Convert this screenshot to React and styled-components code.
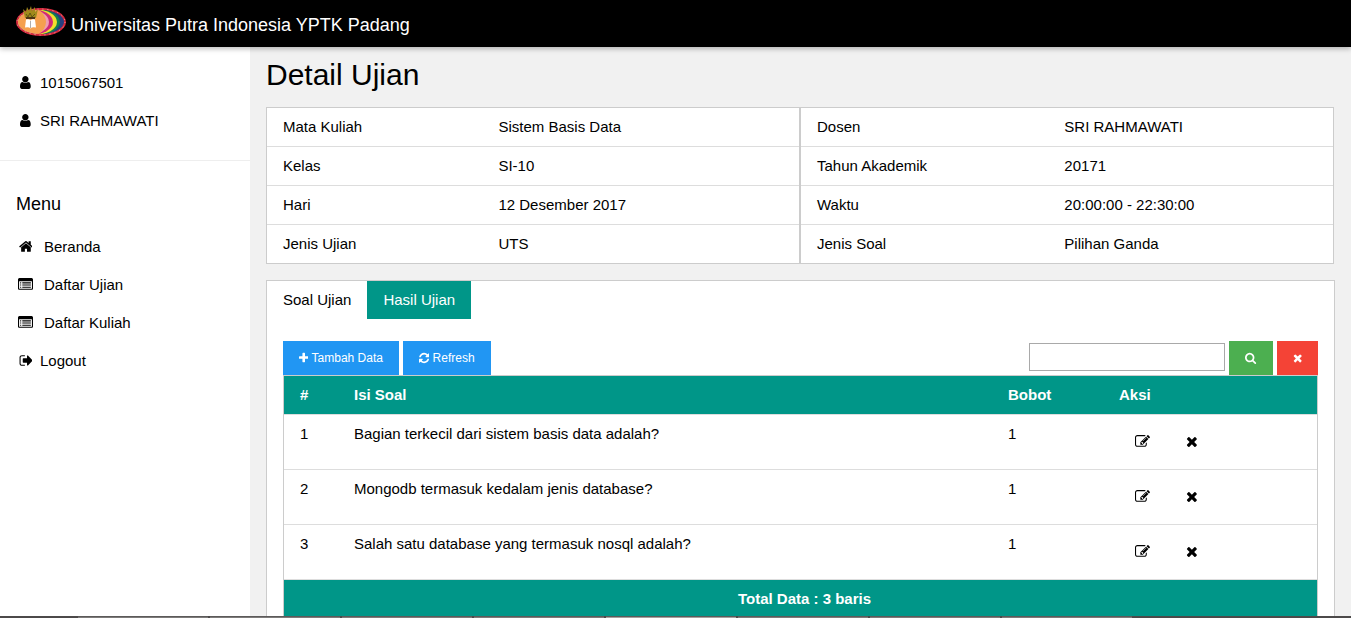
import React from "react";
import styled, { createGlobalStyle, css } from "styled-components";

const Global = createGlobalStyle`
  *, *::before, *::after { box-sizing: border-box; }
  html { scrollbar-width: none; }
  body {
    margin: 0;
    background: #f1f1f1;
    color: #000;
    font-family: "Liberation Sans", Arial, sans-serif;
    font-size: 15px;
    line-height: 22px;
  }
`;

const ICONS = {
  user: {
    width: 1280,
    d: "M1536 1399q0 109-62.5 187t-150.5 78h-854q-88 0-150.5-78t-62.5-187q0-85 8.5-160.5t31.5-152 58.5-131 94-89 134.5-34.5q131 128 313 128t313-128q76 0 134.5 34.5t94 89 58.5 131 31.5 152 8.5 160.5zm-256-887q0 159-112.5 271.5t-271.5 112.5-271.5-112.5-112.5-271.5 112.5-271.5 271.5-112.5 271.5 112.5 112.5 271.5z",
  },
  home: {
    width: 1664,
    d: "M1472 992v480q0 26-19 45t-45 19h-384v-384h-256v384h-384q-26 0-45-19t-19-45v-480q0-1 .5-3t.5-3l575-474 575 474q1 2 1 6zm223-69l-62 74q-8 9-21 11h-3q-13 0-21-7l-692-577-692 577q-12 8-24 7-13-2-21-11l-62-74q-8-10-7-23.5t11-21.5l719-599q32-26 76-26t76 26l244 204v-195q0-14 9-23t23-9h192q14 0 23 9t9 23v408l219 182q10 8 11 21.5t-7 23.5z",
  },
  list: {
    width: 1792,
    d: "M160 128h1472q66 0 113 47t47 113v1088q0 66-47 113t-113 47h-1472q-66 0-113-47t-47-113v-1088q0-66 47-113t113-47zM160 512q-13 0-22.500 9.500t-9.500 22.500v832q0 13 9.500 22.500t22.500 9.500h1472q13 0 22.500-9.500t9.500-22.500v-832q0-13-9.500-22.500t-22.500-9.500zM256 640h128v128h-128zM512 640h1024v128h-1024zM256 896h128v128h-128zM512 896h1024v128h-1024zM256 1152h128v128h-128zM512 1152h1024v128h-1024z",
  },
  signOut: {
    width: 1664,
    d: "M704 1440q0 4 1 20t.5 26.500-3 23.500-10 19.500-20.500 6.500h-320q-119 0-203.500-84.500t-84.500-203.500v-704q0-119 84.500-203.500t203.500-84.500h320q13 0 22.500 9.500t9.500 22.500q0 4 1 20t.5 26.500-3 23.500-10 19.500-20.500 6.500h-320q-66 0-113 47t-47 113v704q0 66 47 113t113 47h312l11.500 1 11.500 3 8 5.500 7 9 2 13.500zm928-544q0 26-19 45l-544 544q-19 19-45 19t-45-19-19-45v-288h-448q-26 0-45-19t-19-45v-384q0-26 19-45t45-19h448v-288q0-26 19-45t45-19 45 19l544 544q19 19 19 45z",
  },
  plus: {
    width: 1408,
    d: "M1600 736v192q0 40-28 68t-68 28h-416v416q0 40-28 68t-68 28h-192q-40 0-68-28t-28-68v-416h-416q-40 0-68-28t-28-68v-192q0-40 28-68t68-28h416v-416q0-40 28-68t68-28h192q40 0 68 28t28 68v416h416q40 0 68 28t28 68z",
  },
  refresh: {
    width: 1536,
    d: "M1639 1056q0 5-1 7-64 268-268 434.5t-478 166.5q-146 0-282.5-55t-243.5-157l-129 129q-19 19-45 19t-45-19-19-45v-448q0-26 19-45t45-19h448q26 0 45 19t19 45-19 45l-137 137q71 66 161 102t187 36q134 0 250-65t186-179q11-17 53-117 8-23 30-23h192q13 0 22.5 9.5t9.500 22.500zm25-800v448q0 26-19 45t-45 19h-448q-26 0-45-19t-19-45 19-45l138-138q-148-137-349-137-134 0-250 65t-186 179q-11 17-53 117-8 23-30 23h-199q-13 0-22.5-9.5t-9.500-22.500v-7q65-268 270-434.5t480-166.5q146 0 284 55.5t245 156.5l130-129q19-19 45-19t45 19 19 45z",
  },
  search: {
    width: 1664,
    d: "M1216 832q0-185-131.5-316.5t-316.5-131.5-316.5 131.5-131.5 316.5 131.5 316.5 316.5 131.5 316.5-131.5 131.5-316.5zm512 832q0 52-38 90t-90 38q-54 0-90-38l-343-342q-179 124-399 124-143 0-273.5-55.5t-225-150-150-225-55.5-273.5 55.5-273.5 150-225 225-150 273.5-55.5 273.5 55.5 225 150 150 225 55.5 273.5q0 220-124 399l343 343q37 37 37 90z",
  },
  times: {
    width: 1408,
    d: "M1490 1322q0 40-28 68l-136 136q-28 28-68 28t-68-28l-294-294-294 294q-28 28-68 28t-68-28l-136-136q-28-28-28-68t28-68l294-294-294-294q-28-28-28-68t28-68l136-136q28-28 68-28t68 28l294 294 294-294q28-28 68-28t68 28l136 136q28 28 28 68t-28 68l-294 294 294 294q28 28 28 68z",
  },
  edit: {
    width: 1792,
    d: "M888 1184l116-116-152-152-116 116v56h96v96h56zm440-720q-16-16-33 1l-350 350q-17 17-1 33t33-1l350-350q17-17 1-33zm80 594v190q0 119-84.5 203.5t-203.5 84.5h-832q-119 0-203.5-84.5t-84.5-203.5v-832q0-119 84.5-203.5t203.5-84.5h832q63 0 117 25 15 7 18 23 3 17-9 29l-49 49q-14 14-32 8-23-6-45-6h-832q-66 0-113 47t-47 113v832q0 66 47 113t113 47h832q66 0 113-47t47-113v-126q0-13 9-22l64-64q15-15 35-7t20 29zm-96-738l288 288-672 672h-288v-288zm444 132l-92 92-288-288 92-92q28-28 68-28t68 28l152 152q28 28 28 68t-28 68z",
  },
};

const Glyph = styled.svg`
  height: 1em;
  flex: none;
  fill: currentColor;
  vertical-align: -2px;
`;

function Icon({ name }) {
  const { width, d } = ICONS[name];
  const left = name === "signOut" ? 0 : (1792 - width) / 2;
  return (
    <Glyph viewBox={`${left} 0 ${width} 1792`} aria-hidden="true">
      <path d={d} fillRule={name === "list" ? "evenodd" : "nonzero"} />
    </Glyph>
  );
}

const TopBar = styled.header`
  position: relative;
  z-index: 2;
  display: flex;
  align-items: flex-start;
  gap: 5px;
  padding: 6px 16px 5px;
  background: #000;
  color: #fff;
  font-size: 18px;
  line-height: 32px;
  box-shadow: 0 2px 5px rgba(0, 0, 0, 0.26);
`;

const Brand = styled.span`
  padding: 3px 0 1px;
`;

const LogoArt = styled.svg`
  width: 50px;
  height: 30px;
  flex: none;
`;

function Logo() {
  return (
    <LogoArt viewBox="0 0 50 30" aria-hidden="true">
      <defs>
        <clipPath id="seal"><ellipse cx="25" cy="16" rx="23" ry="12" /></clipPath>
      </defs>
      <ellipse cx="25" cy="16" rx="25" ry="14" fill="#d5283c" />
      <ellipse cx="25" cy="16" rx="24" ry="13" fill="none" stroke="#f3a9a4" strokeWidth="1" strokeDasharray="1 4" />
      <g clipPath="url(#seal)">
        <rect width="50" height="30" fill="#263f80" />
        <ellipse cx="21" cy="16" rx="23" ry="13" fill="#14804e" />
        <ellipse cx="18" cy="16" rx="23" ry="13" fill="#f2df2c" />
        <ellipse cx="15" cy="16" rx="22" ry="13" fill="#d02a76" />
        <ellipse cx="11" cy="16" rx="22" ry="13" fill="#ef9fb0" />
        <ellipse cx="6" cy="16" rx="24" ry="17" fill="#f5a04f" />
      </g>
      <path d="M9 12 7 3l3 3 1-5 2 4 2-5 1 5 3-4v5l3-3-2 9z" fill="#a08a1c" />
      <path d="M10 8l2 3 2-4 2 4 3-3" fill="none" stroke="#5d5613" />
      <path d="M10 11h9v2h-9z" fill="#4c3515" />
      <path d="M10 13.500q3-1 4.500 1 1.500-2 4.500-1l1 8q-4-1-5.500 1-1.500-2-5.500-1z" fill="#fff" />
      <path d="M14.500 15v7" stroke="#777" strokeWidth=".6" />
    </LogoArt>
  );
}

const Shell = styled.div`
  display: flex;
  min-height: calc(100vh - 47px);
`;

const Sidebar = styled.aside`
  flex: 0 0 250px;
  background: #fff;
`;

const Profile = styled.ul`
  margin: 0;
  padding: 17px 0 20px;
  list-style: none;
  border-bottom: 1px solid #eee;
`;

const sideRow = css`
  display: flex;
  align-items: center;
  gap: ${(p) => (p.$wide ? "9px" : "5px")};
  padding: 8px 16px;
`;

const ProfileRow = styled.li`
  ${sideRow}
`;

const MenuLink = styled.a`
  ${sideRow}
  color: inherit;
  text-decoration: none;
`;

const IconSlot = styled.span`
  display: flex;
  justify-content: center;
  width: 19px;
  padding-bottom: 1px;
`;

const MenuTitle = styled.h2`
  margin: 30px 16px 10px;
  font-size: 18px;
  font-weight: 400;
  line-height: 27px;
`;

const Content = styled.main`
  flex: 1;
  min-width: 0;
  padding: 5px 16px 16px;
`;

const PageTitle = styled.h1`
  margin: 0 0 10px;
  font-size: 30px;
  font-weight: 400;
  line-height: 45px;
`;

const InfoGrid = styled.div`
  display: grid;
  grid-template-columns: 1fr 1fr;
  margin: 0 1px 16px 0;
`;

const InfoTable = styled.table`
  width: 100%;
  table-layout: fixed;
  border-spacing: 0;
  border: 1px solid #ccc;
  background: #fff;

  th, td {
    height: 39px;
    padding: 8px;
    border-bottom: 1px solid #ddd;
    text-align: left;
    font-weight: 400;
  }
  th {
    width: ${(p) => p.$labelWidth};
    padding-left: 16px;
  }
  tr:last-child > * {
    height: 38px;
    border-bottom: 0;
  }
`;

const Panel = styled.section`
  background: #fff;
  border: 1px solid #ccc;
`;

const Tabs = styled.div`
  display: flex;
`;

const Tab = styled.button`
  padding: 8px 16px;
  border: 0;
  font: inherit;
  background: ${(p) => (p.$filled ? "#009688" : "transparent")};
  color: ${(p) => (p.$filled ? "#fff" : "#000")};
`;

const PanelBody = styled.div`
  padding: 22px 16px 16px;
`;

const Toolbar = styled.div`
  display: flex;
  align-items: center;
  justify-content: space-between;
`;

const Group = styled.div`
  display: flex;
  align-items: flex-start;
  gap: 4px;
`;

const tones = { blue: "#2196f3", green: "#4caf50", red: "#f44336" };

const Button = styled.button`
  height: 34px;
  padding: 8px 16px;
  border: 0;
  background: ${(p) => tones[p.$tone]};
  color: #fff;
  font: inherit;
  font-size: 12px;
  line-height: 18px;
  white-space: nowrap;
`;

const SearchBox = styled.input`
  width: 196px;
  height: 28px;
  margin: 2px 0 0;
  padding: 2px 4px;
  border: 1px solid #a9a9a9;
  background: #fff;
  font: inherit;
`;

const Questions = styled.table`
  width: 100%;
  table-layout: fixed;
  border-spacing: 0;
  border: 1px solid #ccc;
  border-bottom: 0;

  th, td {
    padding: 8px;
    border-bottom: 1px solid #ddd;
    text-align: left;
    vertical-align: top;
  }
  th:first-child, td:first-child { padding-left: 16px; }
  thead th, tfoot td {
    background: #009688;
    color: #fff;
    font-weight: 700;
  }
  tfoot td { text-align: center; }
`;

const Col = styled.col`
  width: ${(p) => p.$w};
`;

const Actions = styled.div`
  display: flex;
  gap: 4px;
`;

const IconButton = styled.button`
  display: flex;
  align-items: center;
  height: 38px;
  padding: 8px 16px 10px;
  border: 0;
  background: transparent;
  color: #000;
  font: inherit;
`;

const Dock = styled.div`
  position: fixed;
  z-index: 3;
  inset: auto 0 0;
  display: flex;
  height: 2px;
  padding-left: 78px;
  gap: 2px;
  background: #4c4a4a;
`;

const DockItem = styled.span`
  flex: 0 1 130px;
  border-top: 1px solid #5c5a5a;
  background: ${(p) => (p.$active ? "#a3a19e" : "#7d7b7a")};
`;

const menu = [
  { icon: "home", label: "Beranda", wide: true },
  { icon: "list", label: "Daftar Ujian", wide: true },
  { icon: "list", label: "Daftar Kuliah", wide: true },
  { icon: "signOut", label: "Logout", wide: false },
];

const course = [
  ["Mata Kuliah", "Sistem Basis Data"],
  ["Kelas", "SI-10"],
  ["Hari", "12 Desember 2017"],
  ["Jenis Ujian", "UTS"],
];

const session = [
  ["Dosen", "SRI RAHMAWATI"],
  ["Tahun Akademik", "20171"],
  ["Waktu", "20:00:00 - 22:30:00"],
  ["Jenis Soal", "Pilihan Ganda"],
];

const questions = [
  "Bagian terkecil dari sistem basis data adalah?",
  "Mongodb termasuk kedalam jenis database?",
  "Salah satu database yang termasuk nosql adalah?",
];

function Info({ rows, labelWidth }) {
  return (
    <InfoTable $labelWidth={labelWidth}>
      <tbody>
        {rows.map(([label, value]) => (
          <tr key={label}>
            <th scope="row">{label}</th>
            <td>{value}</td>
          </tr>
        ))}
      </tbody>
    </InfoTable>
  );
}

export default function App() {
  return (
    <>
      <Global />
      <TopBar>
        <Logo />
        <Brand>Universitas Putra Indonesia YPTK Padang</Brand>
      </TopBar>
      <Shell>
        <Sidebar>
          <Profile>
            {["1015067501", "SRI RAHMAWATI"].map((text) => (
              <ProfileRow key={text}>
                <IconSlot><Icon name="user" /></IconSlot>
                {text}
              </ProfileRow>
            ))}
          </Profile>
          <MenuTitle>Menu</MenuTitle>
          <nav>
            {menu.map(({ icon, label, wide }) => (
              <MenuLink key={label} href="#" $wide={wide}>
                <IconSlot><Icon name={icon} /></IconSlot>
                {label}
              </MenuLink>
            ))}
          </nav>
        </Sidebar>
        <Content>
          <PageTitle>Detail Ujian</PageTitle>
          <InfoGrid>
            <Info rows={course} labelWidth="42%" />
            <Info rows={session} labelWidth="48%" />
          </InfoGrid>
          <Panel>
            <Tabs>
              <Tab type="button">Soal Ujian</Tab>
              <Tab type="button" $filled>Hasil Ujian</Tab>
            </Tabs>
            <PanelBody>
              <Toolbar>
                <Group>
                  <Button type="button" $tone="blue"><Icon name="plus" /> Tambah Data</Button>
                  <Button type="button" $tone="blue"><Icon name="refresh" /> Refresh</Button>
                </Group>
                <Group as="form">
                  <SearchBox type="text" aria-label="Cari soal" />
                  <Button type="button" $tone="green" aria-label="Cari"><Icon name="search" /></Button>
                  <Button type="reset" $tone="red" aria-label="Hapus pencarian"><Icon name="times" /></Button>
                </Group>
              </Toolbar>
              <Questions>
                <colgroup>
                  <Col $w="6%" />
                  <Col />
                  <Col $w="111px" />
                  <Col $w="206px" />
                </colgroup>
                <thead>
                  <tr>
                    <th>#</th>
                    <th>Isi Soal</th>
                    <th>Bobot</th>
                    <th>Aksi</th>
                  </tr>
                </thead>
                <tbody>
                  {questions.map((text, i) => (
                    <tr key={text}>
                      <td>{i + 1}</td>
                      <td>{text}</td>
                      <td>1</td>
                      <td>
                        <Actions>
                          <IconButton type="button" aria-label="Ubah"><Icon name="edit" /></IconButton>
                          <IconButton type="button" aria-label="Hapus"><Icon name="times" /></IconButton>
                        </Actions>
                      </td>
                    </tr>
                  ))}
                </tbody>
                <tfoot>
                  <tr>
                    <td colSpan={4}>Total Data : 3 baris</td>
                  </tr>
                </tfoot>
              </Questions>
            </PanelBody>
          </Panel>
        </Content>
      </Shell>
      <Dock aria-hidden="true">
        {[0, 1, 2, 3, 4, 5, 6, 7].map((n) => (
          <DockItem key={n} $active={n === 4} />
        ))}
      </Dock>
    </>
  );
}
